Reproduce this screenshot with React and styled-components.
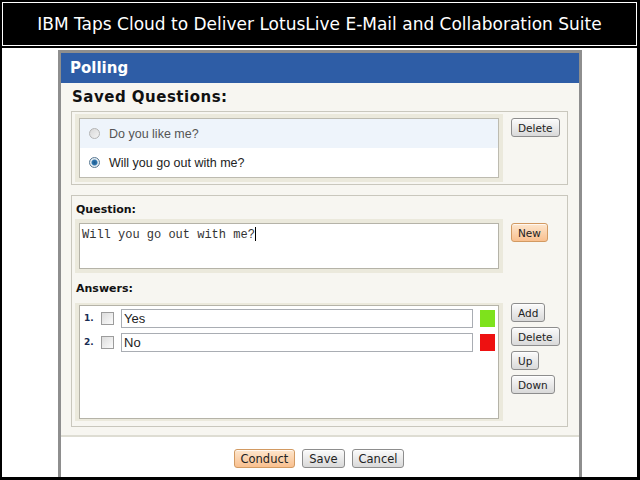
import React from "react";
import styled, { createGlobalStyle } from "styled-components";

const GlobalStyle = createGlobalStyle`
  html, body {
    margin: 0;
    padding: 0;
    background: #000;
  }
  * {
    box-sizing: border-box;
  }
`;

const savedQuestions = [
  { id: 1, text: "Do you like me?", checked: false },
  { id: 2, text: "Will you go out with me?", checked: true },
];

const answers = [
  { id: 1, text: "Yes", color: "#7ee21c" },
  { id: 2, text: "No", color: "#ee1111" },
];

export default function App() {
  return (
    <>
      <GlobalStyle />
      <Page>
        <TitleBar>
          <TitleInner>
            IBM Taps Cloud to Deliver LotusLive E-Mail and Collaboration Suite
          </TitleInner>
        </TitleBar>
        <Content>
          <Dialog>
            <Header>Polling</Header>
            <Body>
              <SectionTitle>Saved Questions:</SectionTitle>
              <Box>
                <Frame>
                  <QuestionList>
                    {savedQuestions.map((q, i) => (
                      <QuestionRow key={q.id} $shaded={i === 0}>
                        <Radio $checked={q.checked} />
                        <QuestionText $dim={!q.checked}>{q.text}</QuestionText>
                      </QuestionRow>
                    ))}
                  </QuestionList>
                </Frame>
                <ButtonColumn $offset="4px">
                  <Button>Delete</Button>
                </ButtonColumn>
              </Box>

              <Box $gapTop>
                <Stack>
                  <Label>Question:</Label>
                  <Row>
                    <Frame>
                      <TextArea>
                        Will you go out with me?<Caret />
                      </TextArea>
                    </Frame>
                    <ButtonColumn $offset="4px">
                      <Button $primary>New</Button>
                    </ButtonColumn>
                  </Row>
                  <Label $answers>Answers:</Label>
                  <Row>
                    <Frame $thin>
                      <AnswerList>
                        {answers.map((a, i) => (
                          <AnswerRow key={a.id}>
                            <Num>{i + 1}.</Num>
                            <CheckBox />
                            <AnswerInput>{a.text}</AnswerInput>
                            <Swatch style={{ background: a.color }} />
                          </AnswerRow>
                        ))}
                      </AnswerList>
                    </Frame>
                    <ButtonColumn>
                      <Button>Add</Button>
                      <Button>Delete</Button>
                      <Button>Up</Button>
                      <Button>Down</Button>
                    </ButtonColumn>
                  </Row>
                </Stack>
              </Box>
            </Body>
            <Footer>
              <Button $primary $big>Conduct</Button>
              <Button $big>Save</Button>
              <Button $big>Cancel</Button>
            </Footer>
          </Dialog>
        </Content>
      </Page>
    </>
  );
}

const Page = styled.div`
  width: 640px;
  height: 480px;
  background: #000;
  padding: 0 3px 3px 2px;
  display: flex;
  flex-direction: column;
  overflow: hidden;
`;

const TitleBar = styled.div`
  height: 48px;
  padding: 2px 0 2px 0;
  flex-shrink: 0;
`;

const TitleInner = styled.div`
  height: 100%;
  border: 1px solid #fff;
  display: flex;
  align-items: center;
  justify-content: center;
  color: #fff;
  font-family: "DejaVu Sans", Verdana, sans-serif;
  font-size: 17px;
  padding-bottom: 1px;
`;

const Content = styled.div`
  flex: 1;
  background: #fff;
  padding: 2px 0 0 56px;
  display: flex;
  min-height: 0;
`;

const Dialog = styled.div`
  width: 524px;
  border: 3px solid #8e8e8e;
  border-bottom: none;
  display: flex;
  flex-direction: column;
  overflow: hidden;
`;

const Header = styled.div`
  height: 30px;
  background: #2e5da6;
  color: #fff;
  font-family: "DejaVu Sans", Verdana, sans-serif;
  font-weight: bold;
  font-size: 15px;
  line-height: 30px;
  padding-left: 9px;
  flex-shrink: 0;
`;

const Body = styled.div`
  background: #f7f6f1;
  padding: 4px 11px 8px 10px;
  border-bottom: 2px solid #deddd3;
  flex-shrink: 0;
`;

const SectionTitle = styled.div`
  font-family: "DejaVu Sans", Verdana, sans-serif;
  font-weight: bold;
  font-size: 15px;
  letter-spacing: 0.5px;
  line-height: 20px;
  color: #111;
  margin: 0 0 4px 1px;
`;

const Box = styled.div`
  border: 1px solid #c9c7bd;
  padding: 2px 5px 2px 3px;
  display: flex;
  gap: 8px;
  align-items: flex-start;
  margin-top: ${(p) => (p.$gapTop ? "10px" : "0")};
  ${(p) => p.$gapTop && "padding-top: 0; padding-bottom: 5px;"}
`;

const Stack = styled.div`
  display: flex;
  flex-direction: column;
  width: 100%;
`;

const Row = styled.div`
  display: flex;
  gap: 8px;
  align-items: flex-start;
`;

const Label = styled.div`
  font-family: "DejaVu Sans", Verdana, sans-serif;
  font-weight: bold;
  font-size: 11px;
  line-height: 18px;
  color: #111;
  margin: ${(p) => (p.$answers ? "7px 0 5px 1px" : "5px 0 0 1px")};
`;

const Frame = styled.div`
  background: #ebe9dc;
  padding: ${(p) => (p.$thin ? "2px 4px" : "4px")};
  flex-shrink: 0;
`;

const QuestionList = styled.div`
  width: 420px;
  background: #fff;
  border: 1px solid #bdbbb0;
`;

const QuestionRow = styled.div`
  height: 29px;
  display: flex;
  align-items: center;
  padding-left: 9px;
  background: ${(p) => (p.$shaded ? "#eef4fb" : "#fff")};
`;

const Radio = styled.span`
  width: 11px;
  height: 11px;
  border-radius: 50%;
  border: 1px solid ${(p) => (p.$checked ? "#5a7a94" : "#b4b4b4")};
  background: ${(p) =>
    p.$checked
      ? "radial-gradient(circle at 50% 50%, #1f5a8c 0, #2f77b0 2.5px, #e8eef3 3.5px, #d6dde3 100%)"
      : "linear-gradient(135deg, #d8d8d8, #f4f4f4)"};
  margin-right: 9px;
  flex-shrink: 0;
`;

const QuestionText = styled.span`
  font-family: "Liberation Sans", Arial, sans-serif;
  font-size: 12.5px;
  color: ${(p) => (p.$dim ? "#555" : "#222")};
`;

const ButtonColumn = styled.div`
  display: flex;
  flex-direction: column;
  align-items: flex-start;
  gap: 5px;
  padding-top: ${(p) => p.$offset || "0"};
`;

const Button = styled.button`
  height: 19px;
  padding: 0 6px;
  font-family: "DejaVu Sans", Tahoma, sans-serif;
  font-size: ${(p) => (p.$big ? "11.5px" : "10.5px")};
  color: #222;
  border-radius: 3px;
  border: 1px solid ${(p) => (p.$primary ? "#d29a62" : "#8d8d8d")};
  background: ${(p) =>
    p.$primary
      ? "linear-gradient(#fde6cd, #f9c08f)"
      : "linear-gradient(#fbfbfb, #d9d9d9)"};
  box-shadow: inset 0 1px 0 rgba(255, 255, 255, 0.7);
  cursor: pointer;
`;

const TextArea = styled.div`
  width: 420px;
  height: 46px;
  background: #fff;
  border: 1px solid #b5b3a8;
  font-family: "Liberation Mono", "Courier New", monospace;
  font-size: 12px;
  color: #333;
  padding: 3px 2px;
  line-height: 15px;
`;

const Caret = styled.span`
  display: inline-block;
  width: 1px;
  height: 14px;
  background: #000;
  vertical-align: -3px;
`;

const AnswerList = styled.div`
  width: 420px;
  height: 114px;
  background: #fff;
  border: 1px solid #b5b3a8;
  padding: 0 0 0 4px;
`;

const AnswerRow = styled.div`
  height: 24px;
  display: flex;
  align-items: center;
`;

const Num = styled.span`
  width: 17px;
  font-family: "DejaVu Sans", Verdana, sans-serif;
  font-weight: bold;
  font-size: 9px;
  color: #1a2d53;
`;

const CheckBox = styled.span`
  width: 13px;
  height: 13px;
  border: 1px solid #9c9c9c;
  background: linear-gradient(135deg, #dcdcdc, #fbfbfb);
  flex-shrink: 0;
  margin-right: 7px;
`;

const AnswerInput = styled.div`
  width: 352px;
  height: 19px;
  border: 1px solid #a9adb3;
  background: #fff;
  font-family: "Liberation Sans", Arial, sans-serif;
  font-size: 13px;
  line-height: 17px;
  color: #222;
  padding-left: 2px;
  margin-right: 7px;
`;

const Swatch = styled.span`
  width: 15px;
  height: 17px;
  flex-shrink: 0;
`;

const Footer = styled.div`
  flex: 1;
  background: #fff;
  display: flex;
  justify-content: center;
  align-items: flex-start;
  gap: 7px;
  padding-top: 12px;
  padding-right: 2px;
`;
